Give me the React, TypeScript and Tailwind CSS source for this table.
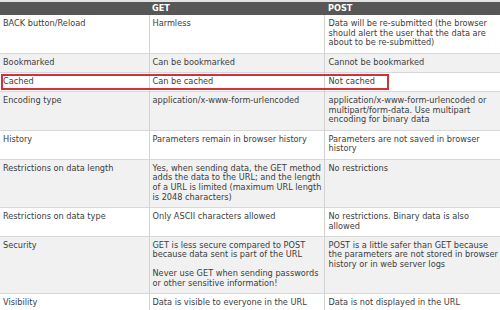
import React from 'react';

// Each cell is a list of paragraphs, each paragraph a list of lines
type Cell = string[][];

interface Row {
  label: string;
  get: Cell;
  post: Cell;
}

const ROWS: Row[] = [
  {
    label: 'BACK button/Reload',
    get: [['Harmless']],
    post: [['Data will be re-submitted (the browser', 'should alert the user that the data are', 'about to be re-submitted)']],
  },
  { label: 'Bookmarked', get: [['Can be bookmarked']], post: [['Cannot be bookmarked']] },
  { label: 'Cached', get: [['Can be cached']], post: [['Not cached']] },
  {
    label: 'Encoding type',
    get: [['application/x-www-form-urlencoded']],
    post: [['application/x-www-form-urlencoded or', 'multipart/form-data. Use multipart', 'encoding for binary data']],
  },
  {
    label: 'History',
    get: [['Parameters remain in browser history']],
    post: [['Parameters are not saved in browser', 'history']],
  },
  {
    label: 'Restrictions on data length',
    get: [['Yes, when sending data, the GET method', 'adds the data to the URL; and the length', 'of a URL is limited (maximum URL length', 'is 2048 characters)']],
    post: [['No restrictions']],
  },
  {
    label: 'Restrictions on data type',
    get: [['Only ASCII characters allowed']],
    post: [['No restrictions. Binary data is also', 'allowed']],
  },
  {
    label: 'Security',
    get: [
      ['GET is less secure compared to POST', 'because data sent is part of the URL'],
      ['Never use GET when sending passwords', 'or other sensitive information!'],
    ],
    post: [['POST is a little safer than GET because', 'the parameters are not stored in browser', 'history or in web server logs']],
  },
  {
    label: 'Visibility',
    get: [['Data is visible to everyone in the URL']],
    post: [['Data is not displayed in the URL']],
  },
];

function CellText({ cell }: { cell: Cell }) {
  return (
    <>
      {cell.map((para, i) => (
        <p key={i} className={i > 0 ? 'mt-[9px]' : ''}>
          {para.map((line, j) => (
            <React.Fragment key={j}>
              {j > 0 && <br />}
              {line}
            </React.Fragment>
          ))}
        </p>
      ))}
    </>
  );
}

export default function App() {
  return (
    <div className="relative w-[500px] h-[310px] overflow-hidden bg-white font-['DejaVu_Sans',Verdana,sans-serif] text-[8.2px] leading-[9.7px] text-[#3d3d3d]">
      <div className="h-[2px] bg-[#e4e4e4]" />

      <table className="w-[500px] table-fixed border-collapse">
        <colgroup>
          <col className="w-[149px]" />
          <col className="w-[175px]" />
          <col className="w-[176px]" />
        </colgroup>
        <thead>
          <tr className="h-[13px] bg-[#575757] text-white font-bold">
            <th className="p-0 pl-[3px] text-left" />
            <th className="p-0 pl-[3px] text-left">GET</th>
            <th className="p-0 pl-[4px] text-left">POST</th>
          </tr>
        </thead>
        <tbody>
          {ROWS.map((row, i) => (
            <tr
              key={row.label}
              className={`${i % 2 === 1 ? 'bg-[#f1f1f1]' : 'bg-white'} border-b border-[#d8d8d8] align-top whitespace-nowrap`}
            >
              <td className="pt-[4px] pb-[4.5px] pl-[3px] border-r border-[#d2d2d2]">{row.label}</td>
              <td className="pt-[4px] pb-[4.5px] pl-[3px] border-r border-[#d2d2d2]">
                <CellText cell={row.get} />
              </td>
              <td className="pt-[4px] pb-[4.5px] pl-[4px]">
                <CellText cell={row.post} />
              </td>
            </tr>
          ))}
        </tbody>
      </table>

      {/* red highlight over the Cached row */}
      <div className="absolute left-[1px] top-[74px] w-[388px] h-[16px] border-2 border-[#d4303b] pointer-events-none" />
    </div>
  );
}
